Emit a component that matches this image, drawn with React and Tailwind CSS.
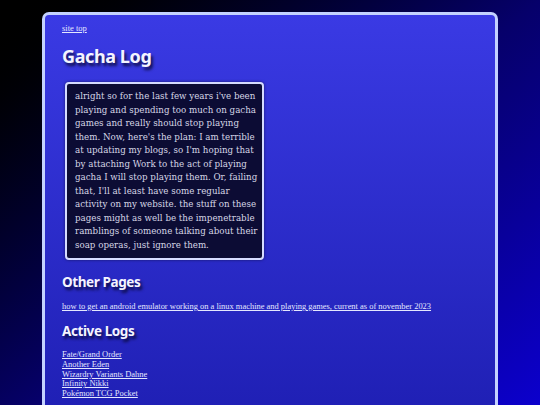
import React from "react";

const logs = [
  "Fate/Grand Order",
  "Another Eden",
  "Wizardry Variants Dahne",
  "Infinity Nikki",
  "Pokémon TCG Pocket",
];

// lines as they wrap in the reference
const intro = [
  "alright so for the last few years i've been",
  "playing and spending too much on gacha",
  "games and really should stop playing",
  "them. Now, here's the plan: I am terrible",
  "at updating my blogs, so I'm hoping that",
  "by attaching Work to the act of playing",
  "gacha I will stop playing them. Or, failing",
  "that, I'll at least have some regular",
  "activity on my website. the stuff on these",
  "pages might as well be the impenetrable",
  "ramblings of someone talking about their",
  "soap operas, just ignore them.",
];

const headFont = { fontFamily: '"Noto Sans", "Open Sans", sans-serif' };

const App = () => {
  return (
    <div className="min-h-[405px] bg-gradient-to-br from-[#000000] via-[#06006a] to-[#0c00d4] pt-3 overflow-hidden">
      <div className="mx-auto w-[456px] min-h-[420px] rounded-t-[7px] border-[3px] border-b-0 border-[#c4d2ff] bg-gradient-to-b from-[#3a3ae4] to-[#1e1eb2] pl-[17px] pr-5 pt-[7px] pb-6 font-['Liberation_Serif',serif] text-[#dfe4ff]">
        {/* Header */}
        <div className="text-[8.5px] leading-[12px]">
          <a href="#" className="underline text-[#e4e8ff]">site top</a>
        </div>
        <h1
          className="mt-[10px] text-[18px] leading-[24px] tracking-[-0.4px] font-bold text-[#f4f4ff] [text-shadow:2px_3px_3px_rgba(0,0,20,0.75)]"
          style={headFont}
        >
          Gacha Log
        </h1>

        {/* Intro box */}
        <div className="mt-[14px] ml-[3px] w-[199px] rounded-[4px] border-2 border-[#d6dcff] bg-[#0c0c34] pl-[8px] pt-[6px] pb-[6px] shadow-[0_0_3px_rgba(0,0,0,0.5)]">
          <p className="text-[8.7px] leading-[13.5px] text-[#d6d6e6] font-['DejaVu_Serif',serif]">
            {intro.map((line) => (
              <span key={line} className="block whitespace-nowrap">{line}</span>
            ))}
          </p>
        </div>

        {/* Other pages */}
        <h2
          className="mt-[13px] text-[13.5px] leading-[18px] tracking-[-0.4px] font-bold text-[#f4f4ff] [text-shadow:2px_3px_3px_rgba(0,0,20,0.75)]"
          style={headFont}
        >
          Other Pages
        </h2>
        <div className="mt-[9px] text-[8.45px] leading-[12px]">
          <a href="#" className="underline text-[#e4e8ff]">
            how to get an android emulator working on a linux machine and playing games, current as of november 2023
          </a>
        </div>

        {/* Active logs */}
        <h2
          className="mt-[10px] text-[13.5px] leading-[18px] tracking-[-0.4px] font-bold text-[#f4f4ff] [text-shadow:2px_3px_3px_rgba(0,0,20,0.75)]"
          style={headFont}
        >
          Active Logs
        </h2>
        <ul className="mt-[10px] flex flex-col text-[8.45px] leading-[9.75px]">
          {logs.map((name) => (
            <li key={name}>
              <a href="#" className="underline text-[#e4e8ff]">{name}</a>
            </li>
          ))}
        </ul>
      </div>
    </div>
  );
};

export default App;
